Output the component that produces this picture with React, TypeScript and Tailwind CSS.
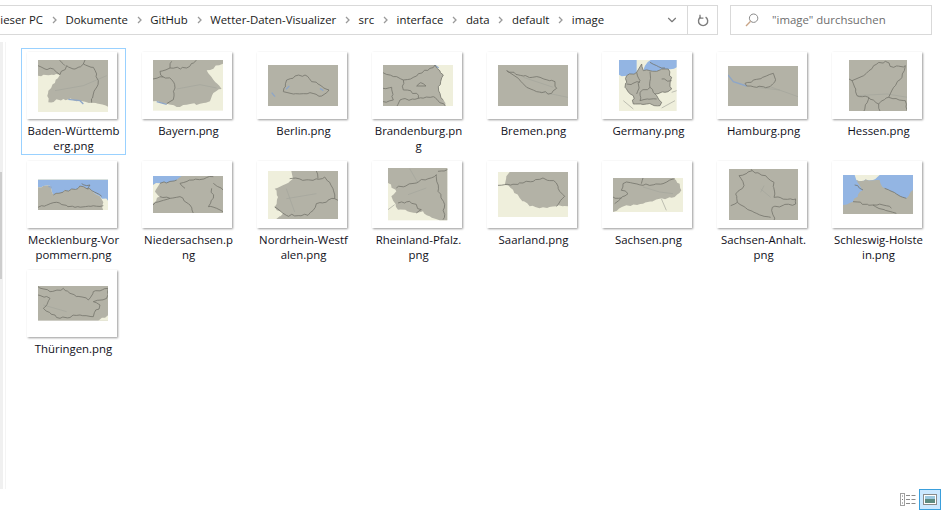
import { ChevronDown } from 'lucide-react';

const crumbs = ['Dieser PC', 'Dokumente', 'GitHub', 'Wetter-Daten-Visualizer', 'src', 'interface', 'data', 'default', 'image'];

interface MapShape {
  box: [number, number, number, number];
  back: string;
  land?: string;
  water?: string;
  cream?: string;
  lines: string[];
  faint?: string[];
  river?: string[];
}

interface FileItem {
  label: string[];
  map: MapShape;
}

const cream = '#efefdc';
const grey = '#b3b2a6';
const blue = '#93b5e3';

const files: FileItem[] = [
  {
    label: ['Baden-Württemb', 'erg.png'],
    map: {
      box: [114, 178, 210, 156],
      back: cream,
      land: 'M114 178H324V318L275 306L240 300L190 295L145 305L145 270L180 222L114 225Z',
      lines: ['M180 222L200 195L225 205L250 190L280 200L295 240L280 280L275 306', 'M114 195L135 205L160 205L180 222', 'M178 178L195 195', 'M250 190L255 178'],
      faint: ['M165 270L250 255L320 225'],
      river: ['M205 296L240 300L250 310'],
    },
  },
  {
    label: ['Bayern.png'],
    map: {
      box: [459, 181, 210, 152],
      back: cream,
      land: 'M459 181H669V192L620 212L640 240L665 268L640 280L630 305L600 312L560 315L530 322L500 312L459 305Z',
      lines: ['M459 238L490 232L515 240L525 265L520 300L500 312', 'M480 215L510 205L515 185', 'M510 205L560 205L590 181', 'M490 232L480 215'],
      faint: ['M530 268L600 255L650 265'],
      river: ['M470 306L500 314'],
    },
  },
  {
    label: ['Berlin.png'],
    map: {
      box: [804, 195, 210, 123],
      back: grey,
      lines: ['M850 275L860 240L885 228L915 225L935 245L965 258L987 270L965 288L930 278L880 282Z'],
      river: ['M815 278L825 290', 'M858 268L868 258', 'M960 265L970 272'],
    },
  },
  {
    label: ['Brandenburg.pn', 'g'],
    map: {
      box: [1149, 195, 211, 125],
      back: cream,
      land: 'M1149 195H1305L1330 225L1315 260L1330 300L1336 320H1149Z',
      lines: ['M1149 218L1190 230L1210 240L1250 228L1290 205L1305 195', 'M1210 240L1210 270L1250 280L1255 295L1200 300L1190 320', 'M1255 295L1300 290L1336 318', 'M1250 258L1262 248L1278 258Z', 'M1149 265L1175 262L1180 300L1149 305', 'M1305 195L1330 225L1315 260L1330 300'],
      river: ['M1305 196L1316 204'],
    },
  },
  {
    label: ['Bremen.png'],
    map: {
      box: [54, 195, 210, 125],
      back: grey,
      lines: ['M80 212L130 228L180 232L225 245L230 265L215 280L170 275L140 262L115 235Z'],
      faint: ['M180 275L264 292', 'M130 232L220 262'],
    },
  },
  {
    label: ['Germany.png'],
    map: {
      box: [417, 178, 173, 155],
      back: cream,
      water: 'M417 178H590V200L565 205L530 212L490 210L470 215L440 225L417 222Z',
      cream: 'M470 178H512L495 195L490 210L470 215Z',
      land: 'M485 190L490 210L530 212L565 205L575 230L570 250L575 265L555 275L525 280L545 305L540 315L500 310L460 310L460 285L435 260L440 225L470 215Z',
      lines: ['M485 190L490 210L530 212L565 205L575 230L570 250L575 265L555 275L525 280L545 305L540 315L500 310L460 310L460 285L435 260L440 225L470 215Z', 'M470 215L480 240L470 280', 'M510 213L510 260L525 280', 'M510 260L480 275L480 300L530 295', 'M440 250L480 245', 'M545 235L575 240', 'M510 185L530 195L555 202'],
      faint: ['M430 300L460 325', 'M545 322L585 300', 'M575 275L590 270'],
    },
  },
  {
    label: ['Hamburg.png'],
    map: {
      box: [744, 198, 210, 120],
      back: grey,
      lines: ['M795 250L820 240L880 220L885 245L870 260L830 262L800 258Z'],
      faint: ['M870 260L954 290', 'M830 262L900 270'],
      river: ['M744 225L760 245L800 258'],
    },
  },
  {
    label: ['Hessen.png'],
    map: {
      box: [1106, 178, 176, 155],
      back: grey,
      lines: ['M1150 225L1180 195L1215 182L1240 200L1275 195L1265 230L1240 260L1225 290L1195 310L1165 290L1130 285L1115 240Z', 'M1106 235L1115 240', 'M1165 290L1150 333', 'M1195 310L1200 333', 'M1225 290L1275 300L1282 333'],
      faint: ['M1130 285L1220 280L1282 290'],
    },
  },
  {
    label: ['Mecklenburg-Vor', 'pommern.png'],
    map: {
      box: [114, 70, 210, 95],
      back: cream,
      water: 'M114 72H324V135L300 122L275 105L250 93L215 100L160 118L150 90L114 95Z',
      land: 'M114 95L150 90L160 118L215 100L250 93L275 105L300 122L310 140L310 165H114Z',
      lines: ['M160 118L215 100L250 93L275 105L305 122', 'M114 155L170 140L225 155L310 150', 'M245 84L270 88L262 100'],
      river: ['M145 92L155 95'],
    },
  },
  {
    label: ['Niedersachsen.p', 'ng'],
    map: {
      box: [459, 63, 210, 112],
      back: grey,
      water: 'M459 63H545L530 75L480 85L459 90Z',
      cream: 'M459 90L480 85L465 110L478 125L459 145Z',
      lines: ['M480 125L510 130L540 125L570 150L580 175', 'M635 100L640 130L625 155L650 160L669 170', 'M540 85L580 75L640 65', 'M640 85L669 105', 'M459 150L510 130', 'M480 85L530 75', 'M540 85L555 100'],
    },
  },
  {
    label: ['Nordrhein-Westf', 'alen.png'],
    map: {
      box: [805, 47, 210, 144],
      back: cream,
      land: 'M875 47H1015V191H830L850 175L825 155L835 125L825 100L860 85L880 70Z',
      lines: ['M870 70L940 75L975 65L1000 100L1005 130L950 145L925 180L860 180L825 155', 'M950 47L955 70', 'M1005 130L1015 135'],
      faint: ['M860 100L885 170', 'M860 130L950 115'],
    },
  },
  {
    label: ['Rheinland-Pfalz.', 'png'],
    map: {
      box: [1165, 40, 178, 157],
      back: cream,
      land: 'M1165 40H1343V197H1320L1290 185L1270 170L1250 175L1195 165L1175 125L1190 110L1165 85Z',
      lines: ['M1190 100L1250 85L1310 60L1315 110L1335 150L1330 195', 'M1195 145L1230 140L1265 165L1250 175', 'M1315 50L1343 45'],
      faint: ['M1230 42L1255 85', 'M1225 120L1280 100', 'M1165 165L1185 150'],
    },
  },
  {
    label: ['Saarland.png'],
    map: {
      box: [55, 52, 210, 136],
      back: cream,
      land: 'M90 52H265V155L230 155L190 158L150 155L120 130L100 105L75 90L80 65Z',
      lines: ['M55 92L75 90L130 85L190 70L230 85L240 110L255 125L230 155'],
    },
  },
  {
    label: ['Sachsen.png'],
    map: {
      box: [400, 68, 210, 102],
      back: cream,
      land: 'M400 68H580L600 85L605 105L585 125L540 130L490 145L440 150L400 170Z',
      lines: ['M440 80L430 85L425 105L445 115L405 145', 'M440 80L490 90L550 85L585 70', 'M490 68L485 85', 'M400 125L425 128'],
      faint: ['M490 95L540 110L580 115', 'M545 130L560 165'],
    },
  },
  {
    label: ['Sachsen-Anhalt.', 'png'],
    map: {
      box: [745, 40, 207, 155],
      back: grey,
      lines: ['M775 60L815 45L855 60L880 80L880 125L945 130L945 145L875 155L880 195', 'M775 60L790 90L765 115L770 140L750 150', 'M770 140L820 170L870 185', 'M815 45L810 40'],
      faint: ['M840 100L870 125', 'M850 90L840 110'],
    },
  },
  {
    label: ['Schleswig-Holste', 'in.png'],
    map: {
      box: [1090, 60, 210, 118],
      back: blue,
      cream: 'M1125 60H1200L1180 75L1130 75Z',
      land: 'M1090 178V150L1120 140L1150 105L1130 75L1200 75L1215 100L1280 130L1300 105V178Z',
      lines: ['M1120 140L1180 150L1250 175', 'M1215 100L1280 130', 'M1150 105L1125 90', 'M1180 150L1210 150L1235 160'],
    },
  },
  {
    label: ['Thüringen.png'],
    map: {
      box: [114, 393, 211, 104],
      back: grey,
      cream: 'M295 497L325 480V497Z',
      lines: ['M114 420L150 430L130 460L180 490L240 480L280 485L300 450L280 440L320 430L325 400L280 410L265 435L210 415L190 400L150 410L114 395'],
      faint: ['M130 450L200 470'],
    },
  },
];

// borders in the thumbnails are jagged, so break the straight runs up
const wobble = (x: number, y: number) => {
  const n = Math.sin(Math.round(x) * 12.9898 + Math.round(y) * 78.233) * 43758.5453;
  return (n - Math.floor(n) - 0.5) * 7;
};

function rough(d: string) {
  const parts = d.match(/[MLHVZ][^MLHVZ]*/g) ?? [];
  let cx = 0;
  let cy = 0;
  let out = '';
  for (const p of parts) {
    const cmd = p[0];
    const nums = p.slice(1).trim().split(/\s+/).map(Number);
    if (cmd === 'M') {
      [cx, cy] = nums;
      out += p;
    } else if (cmd === 'H') {
      cx = nums[0];
      out += p;
    } else if (cmd === 'V') {
      cy = nums[0];
      out += p;
    } else if (cmd === 'L') {
      const [x, y] = nums;
      const steps = Math.max(1, Math.round(Math.hypot(x - cx, y - cy) / 10));
      for (let i = 1; i < steps; i++) {
        const px = cx + ((x - cx) * i) / steps;
        const py = cy + ((y - cy) * i) / steps;
        out += `L${(px + wobble(py, px)).toFixed(1)} ${(py + wobble(px, py)).toFixed(1)}`;
      }
      out += p;
      cx = x;
      cy = y;
    } else {
      out += p;
    }
  }
  return out;
}

function MapThumb({ map }: { map: MapShape }) {
  const [x, y, w, h] = map.box;
  return (
    <svg width={w / 3} height={h / 3} viewBox={`${x} ${y} ${w} ${h}`} className="block blur-[0.35px]">
      <rect x={x} y={y} width={w} height={h} fill={map.back} />
      {map.water && <path d={rough(map.water)} fill={blue} />}
      {map.cream && <path d={rough(map.cream)} fill={cream} />}
      {map.land && <path d={rough(map.land)} fill={grey} />}
      {map.faint?.map((d) => <path key={d} d={d} fill="none" stroke="#a3a49c" strokeWidth="2" />)}
      {map.river?.map((d) => <path key={d} d={d} fill="none" stroke="#8ea6c8" strokeWidth="4" />)}
      {map.lines.map((d) => <path key={d} d={rough(d)} fill="none" stroke="#74736b" strokeWidth="2.4" />)}
    </svg>
  );
}

function Crumb() {
  return (
    <svg width="5" height="8" viewBox="0 0 5 8" className="shrink-0">
      <path d="M1 1l3 3-3 3" fill="none" stroke="#9a9a9a" strokeWidth="1.3" />
    </svg>
  );
}

export default function App() {
  return (
    <div className="w-[943px] h-[512px] bg-white overflow-hidden flex flex-col text-[11.4px] leading-[15px] text-[#1a1a1a] font-['Open_Sans',sans-serif]">
      {/* address + search */}
      <div className="flex pt-[5px] h-[42px] shrink-0">
        <div className="w-[720px] -ml-[2px] h-[30px] border border-[#d9d9d9] flex items-center overflow-hidden">
          <div className="flex-1 flex items-center gap-[8.7px] -ml-[7px] -mt-[1px] whitespace-nowrap overflow-hidden">
            {crumbs.map((c, i) => (
              <div key={c} className="flex items-center gap-[8.7px]">
                {i > 0 && <Crumb />}
                <span>{c}</span>
              </div>
            ))}
          </div>
          <div className="w-[30px] flex justify-center shrink-0">
            <ChevronDown size={14} strokeWidth={2} className="text-[#7a7a7a]" />
          </div>
          <div className="w-[30px] h-full border-l border-[#d9d9d9] flex items-center justify-center shrink-0">
            <svg width="12" height="13" viewBox="0 0 12 13">
              <path d="M3.6 3.2A4.6 4.6 0 1 0 8.6 3.2" fill="none" stroke="#7d7d7d" strokeWidth="1.4" />
              <path d="M3 0.8V4.2H6.4" fill="none" stroke="#7d7d7d" strokeWidth="1.3" />
            </svg>
          </div>
        </div>
        <div className="ml-[12px] w-[202px] h-[30px] border border-[#d9d9d9] flex items-center pl-[14px] gap-[13px] text-[#6d6d6d]">
          <svg width="14" height="14" viewBox="0 0 14 14">
            <circle cx="8.6" cy="5.2" r="4.2" fill="none" stroke="#8a8a8a" strokeWidth="1" />
            <path d="M5.6 8.2L1 13" fill="none" stroke="#c9a486" strokeWidth="1.3" />
          </svg>
          <span className="-mt-[1px]">"image" durchsuchen</span>
        </div>
      </div>

      {/* content */}
      <div className="flex h-[447px] shrink-0">
        <div className="w-[3px] bg-[#f0f0f0] shrink-0 pt-[130px]">
          <div className="w-[2px] h-[107px] bg-[#cdcdcd]" />
        </div>
        <div className="w-[3px] border-r border-[#f4f4f4] shrink-0" />
        <div className="grid grid-cols-[repeat(8,105px)] auto-rows-[109px] gap-x-[10px] pl-[15px] pt-[6px]">
          {files.map((f, i) => (
            <div
              key={f.label.join('')}
              className={i === 0 ? 'w-[105px] h-[107px] border border-[#99d1ff] flex flex-col pt-[3px]' : 'w-[105px] h-[107px] border border-transparent flex flex-col pt-[3px]'}
            >
              <div className="ml-[5px] w-[90px] h-[67px] shrink-0 bg-white shadow-[1px_1px_2px_rgba(0,0,0,0.4)] flex items-center justify-center pl-[2px]">
                <MapThumb map={f.map} />
              </div>
              <div className="mt-[4px] w-[103px] text-center text-[#10101a]">
                {f.label.map((l) => <div key={l} className="whitespace-nowrap">{l}</div>)}
              </div>
            </div>
          ))}
        </div>
      </div>

      {/* view switch */}
      <div className="flex-1 flex items-start justify-end pr-[2px] gap-[3px]">
        <div className="flex items-center h-[21px] gap-[1px]">
          <svg width="16" height="13" viewBox="0 0 16 13">
            <rect x="0.5" y="0.5" width="4" height="12" fill="none" stroke="#a0a0a0" />
            <path d="M2 3h1M2 6.5h1M2 10h1" stroke="#777" />
            <path d="M6 2.5h4M11.5 2.5h4M6 6.5h4M11.5 6.5h4M6 10.5h4M11.5 10.5h4" stroke="#8a8a8a" />
          </svg>
        </div>
        <div className="w-[22px] h-[21px] border border-[#3a9fdc] bg-[#cce8ff] flex items-center justify-center">
          <svg width="14" height="11" viewBox="0 0 14 11">
            <rect x="0.5" y="0.5" width="13" height="10" fill="#fff" stroke="#8a8a8a" />
            <rect x="2" y="2" width="10" height="3" fill="#9cc7de" />
            <rect x="2" y="5" width="10" height="4" fill="#5c8a80" />
          </svg>
        </div>
      </div>
    </div>
  );
}
